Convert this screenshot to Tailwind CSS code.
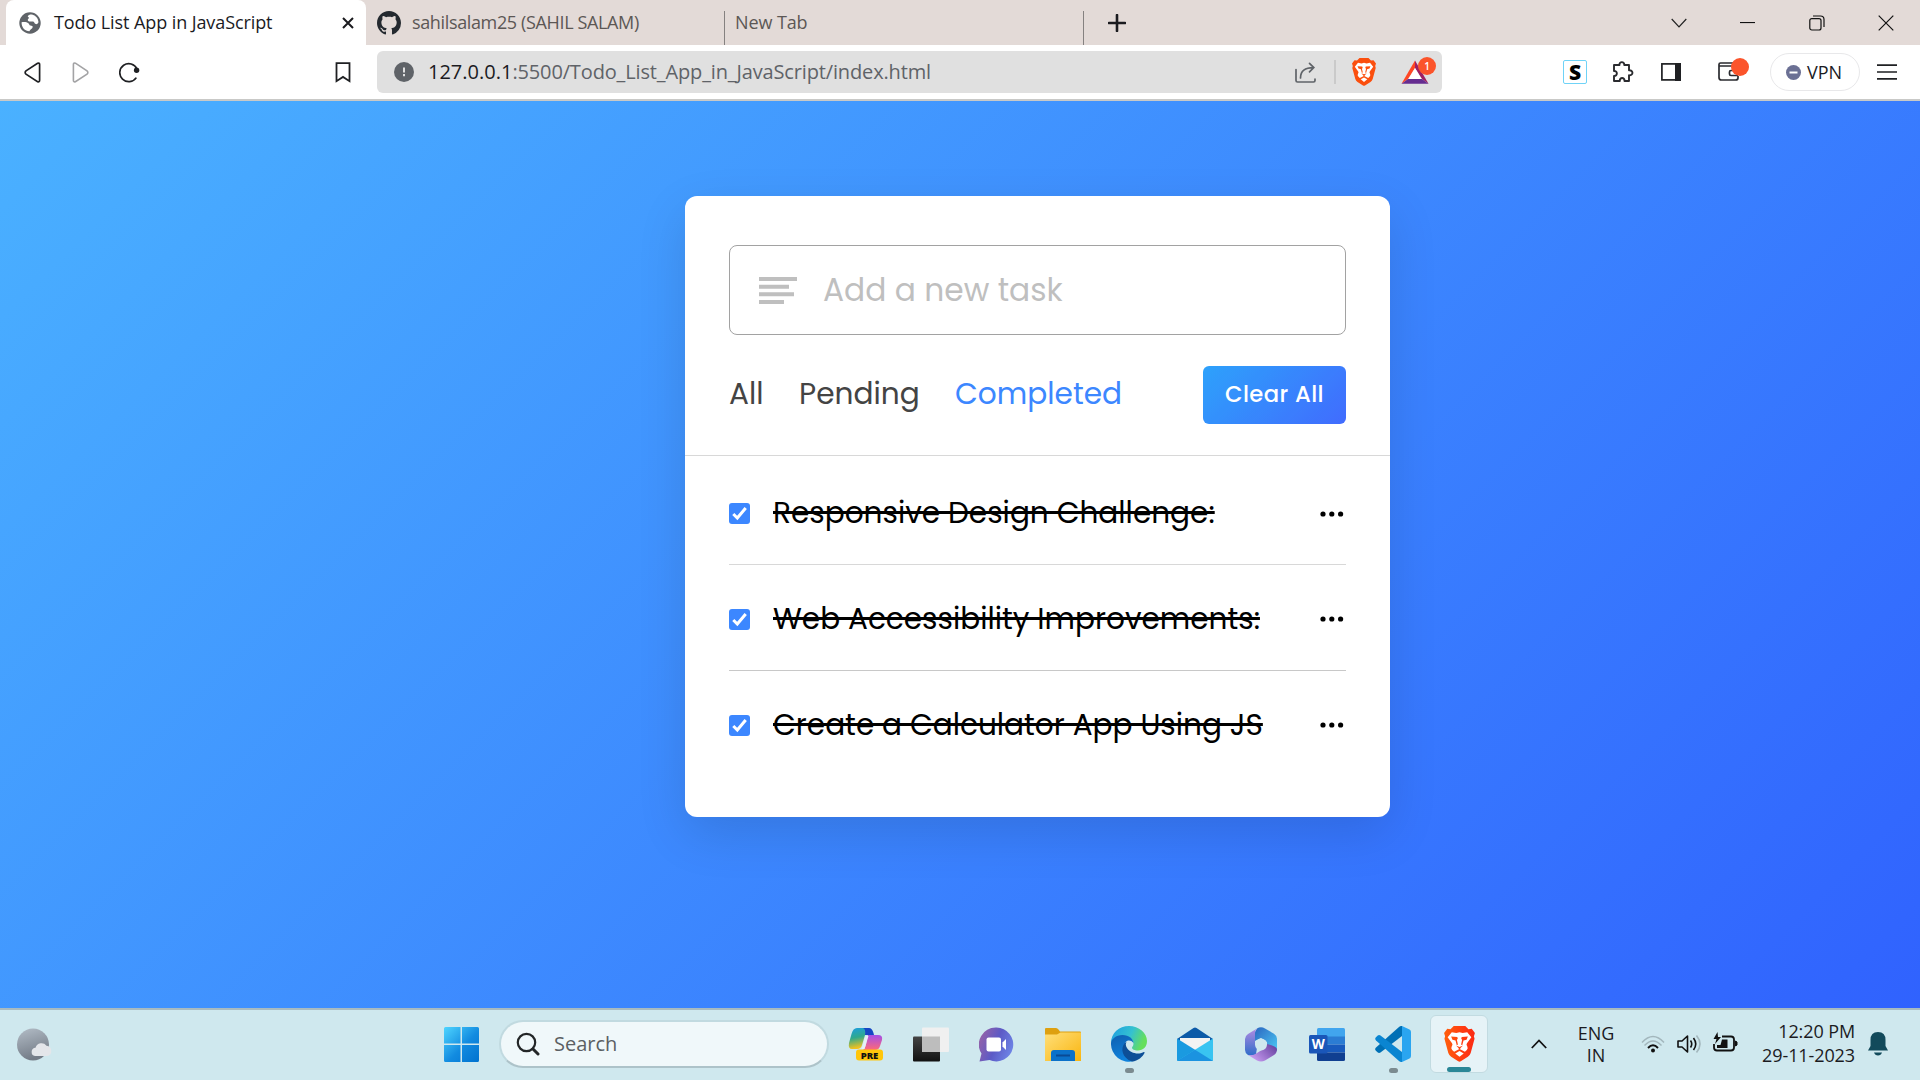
<!DOCTYPE html>
<html lang="en">
<head>
<meta charset="utf-8">
<title>Todo List App in JavaScript</title>
<script src="https://cdn.jsdelivr.net/npm/@tailwindcss/browser@4"></script>
</head>
<body class="w-[1920px] h-[1080px] overflow-hidden flex flex-col font-['Open_Sans',sans-serif] text-[#1b1b1f]">

<!-- Tab strip -->
<header class="h-[45px] shrink-0 bg-[#e3dad7] flex items-center pl-[6px]">
  <div class="w-[360px] h-full bg-white rounded-t-lg flex items-center pl-[13px] pr-[10px]">
    <svg class="w-[22px] h-[22px] shrink-0" viewBox="0 0 22 22"><circle cx="11" cy="11" r="10.7" fill="#5f6368"/><path d="M2.6 10.2c2.600-.4 5.400-.2 6.800 1 1.100 1 .6 1.900 2 2.300 1.400.3 2.400.3 2.300 1.600-.2 1.800-2.500 2.200-3.300 4.100C6 19.200 2.300 15.300 2.600 10.200z" fill="#fff"/><path d="M8.700 4.200c.9-1.600 3.200-2.200 5-1.500 3.300 1 5.600 4 5.800 7.500-.8 1.500-1.500 2.200-2.800 1.900-1.600-.5-1-2.200-2.600-2.600-2-.4-3.600.6-4.800-.5-1-1-.4-2.200.6-2.700.9-.4-.8-1-1.200-2.100z" fill="#fff"/></svg>
    <span class="ml-[13px] text-[18px] font-medium tracking-[-0.09px] whitespace-nowrap">Todo List App in JavaScript</span>
    <svg class="ml-auto w-[12px] h-[12px] mr-[2px]" viewBox="0 0 12 12"><path d="M1 1l10 10M11 1L1 11" stroke="#1b1b1f" stroke-width="2"/></svg>
  </div>
  <svg class="ml-[11px] w-6 h-6 shrink-0" viewBox="0 0 16 16"><path fill="#24292f" d="M8 0C3.580 0 0 3.580 0 8c0 3.540 2.290 6.530 5.470 7.590.4.070.55-.17.55-.38 0-.19-.010-.82-.010-1.490-2.010.37-2.530-.49-2.690-.94-.090-.23-.48-.94-.82-1.130-.28-.15-.68-.52-.010-.53.63-.010 1.080.58 1.230.82.72 1.210 1.870.87 2.330.66.070-.52.28-.87.51-1.070-1.780-.2-3.640-.89-3.640-3.950 0-.87.31-1.590.82-2.150-.080-.2-.36-1.020.080-2.120 0 0 .67-.21 2.200.82.64-.18 1.320-.27 2-.27s1.360.09 2 .27c1.530-1.040 2.200-.82 2.200-.82.44 1.100.16 1.920.08 2.120.51.56.82 1.270.82 2.150 0 3.070-1.870 3.750-3.650 3.950.29.25.54.73.54 1.480 0 1.070-.01 1.930-.01 2.200 0 .21.15.46.55.38A8.010 8.010 0 0 0 16 8c0-4.420-3.580-8-8-8z"/></svg>
  <div class="ml-[11px] w-[312px] h-full flex items-center"><span class="text-[18px] tracking-[-0.36px] text-[#5c5755] whitespace-nowrap">sahilsalam25 (SAHIL SALAM)</span></div>
  <div class="self-end w-[1px] h-[34px] bg-[#858180]"></div>
  <div class="ml-[10px] w-[348px]"><span class="text-[18px] tracking-[-0.1px] text-[#5c5755]">New Tab</span></div>
  <div class="self-end w-[1px] h-[34px] bg-[#858180]"></div>
  <svg class="ml-[24px] w-[18px] h-[18px]" viewBox="0 0 18 18"><path d="M9 1v16M1 9h16" stroke="#1b1b1f" stroke-width="2.600" stroke-linecap="round"/></svg>
  <div class="ml-auto flex items-center mr-[26px]">
    <svg class="w-4 h-[10px] mr-[53px]" viewBox="0 0 16 10"><path d="M.7 1L8 8.800 15.300 1" fill="none" stroke="#222" stroke-width="1.200"/></svg>
    <svg class="w-4 h-[2px] mr-[53px]" viewBox="0 0 16 2"><path d="M0 .5h15" stroke="#111" stroke-width="1.200"/></svg>
    <svg class="w-4 h-4 mr-[53px]" viewBox="0 0 16 16" fill="none" stroke="#111" stroke-width="1.200"><rect x=".8" y="3.600" width="11.200" height="11.400" rx="2"/><path d="M4 1h7.500q3.500 0 3.500 3.500V12"/></svg>
    <svg class="w-4 h-4" viewBox="0 0 16 16"><path d="M.7.7l14.600 14.600M15.300.7L.7 15.300" stroke="#111" stroke-width="1.200"/></svg>
  </div>
</header>

<!-- Toolbar -->
<nav class="h-[56px] pt-[6px] shrink-0 bg-white border-b-2 border-[#c9c9c7] flex items-start">
  <div class="h-[42px] w-[377px] flex items-center pl-[24px] pr-[26px]">
    <svg class="w-[17px] h-[21px]" viewBox="0 0 17 21"><path d="M13.600 1.200L2 8.800q-1.700 1.600 0 3.300l11.600 7.600q2 .6 2-1.400V2.600q0-2-2-1.400z" fill="none" stroke="#1f2023" stroke-width="1.700"/></svg>
    <svg class="ml-[31px] w-[17px] h-[21px]" viewBox="0 0 17 21"><path d="M3.400 1.200L15 8.800q1.700 1.600 0 3.300L3.400 19.700q-2 .6-2-1.400V2.600q0-2 2-1.400z" fill="none" stroke="#a3a3a5" stroke-width="1.600"/></svg>
    <svg class="ml-[30px] w-[21px] h-[21px]" viewBox="0 0 21 21"><path d="M18 7A9 9 0 1 0 17.300 15.600" fill="none" stroke="#1f2023" stroke-width="1.700"/><circle cx="17.600" cy="8.200" r="2.700" fill="#1f2023"/></svg>
    <svg class="ml-auto w-[16px] h-[21px]" viewBox="0 0 16 21"><path d="M1.500 1.200h13v18l-6.500-4.300-6.500 4.300z" fill="none" stroke="#1f2023" stroke-width="1.800"/></svg>
  </div>
  <div class="h-[42px] w-[1065px] bg-[#e0e0e0] rounded-md flex items-center pl-[17px] pr-[6px]">
    <svg class="w-5 h-5" viewBox="0 0 20 20"><circle cx="10" cy="10" r="10" fill="#5f6368"/><path d="M10 5.500v5M10 12v2.200" stroke="#e0e0e0" stroke-width="2"/></svg>
    <div class="ml-[14px] text-[20px] text-[#5f6368] whitespace-nowrap flex"><span class="text-[#1b1b1f]">127.0.0.1</span><span class="tracking-[-0.14px]">:5500/Todo_List_App_in_JavaScript/index.html</span></div>
    <svg class="ml-auto w-[21px] h-[21px]" viewBox="0 0 21 21" fill="none" stroke="#5f6368" stroke-width="1.700" stroke-linecap="round"><path d="M1 7.500v11q0 1.500 1.500 1.500h16q1.500 0 1.500-1.500v-1.500M5.500 16C5.500 9 10 5.600 18.500 5.600M14.500 1.400l4.300 4.200-4.300 4.300"/></svg>
    <div class="ml-[18px] w-[2px] h-6 bg-[#cacaca]"></div>
    <svg class="ml-[16px] w-[24px] h-[28px]" viewBox="0 0 24 28" fill="#fb4f0e"><use href="#lion"/></svg>
    <div class="ml-[25px] w-[35px] h-[28px] relative">
      <svg class="w-[36px] h-[28px]" viewBox="0 0 36 28"><path d="M14 2.500L.5 25.800 7 21 14 10z" fill="#ff4724"/><path d="M14 2.500L27.500 25.800 21 21 14 10z" fill="#9e1f63"/><path d="M.5 25.800h27L21 21H7z" fill="#662d91"/><path d="M14 10L7.500 21h13z" fill="#fff"/></svg>
      <div class="absolute -top-[1px] right-0 w-[18px] h-[18px] rounded-full bg-[#fb542b] text-white text-[10px] leading-[18px] text-center font-semibold">1</div>
    </div>
  </div>
  <div class="h-[42px] flex-1 flex items-center pl-[121px]">
    <div class="w-6 h-6 border border-[#6fd3f7] rounded-[2px] text-black text-[21px] leading-[22px] font-extrabold text-center">S</div>
    <svg class="ml-[25px] w-[22px] h-[22px]" viewBox="0 0 22 22"><path d="M2 4h5.500c-.6-3.800 5.300-3.800 4.700 0H17v5.300c4.600-.6 4.600 5.500 0 5V20h-4.500c.3-4-5-4-4.700 0H2v-5c3.800.2 3.800-5.300 0-5z" fill="none" stroke="#2a2b2f" stroke-width="1.900" stroke-linejoin="round"/></svg>
    <svg class="ml-[27px] w-5 h-[18px]" viewBox="0 0 20 18"><rect x=".9" y=".9" width="18" height="16" fill="none" stroke="#1f2023" stroke-width="1.700"/><path d="M14 0h6v18h-6z" fill="#1f2023"/></svg>
    <div class="ml-[37px] mb-[4px] w-[31px] h-[24px] relative">
      <svg class="w-[31px] h-[24px]" viewBox="0 0 31 24" fill="none" stroke="#2a2b2f" stroke-width="1.700"><path d="M20 9v-2.500q0-1.500-1.500-1.500h-16Q1 5 1 6.500v13Q1 22 3.500 22h14q2.500 0 2.500-2v-2M1 8h18M20 17.500h-7q-1.500 0-1.500-1.500v-2q0-1.500 1.500-1.500h7"/></svg>
      <div class="absolute top-0 right-0 w-[18px] h-[18px] rounded-full bg-[#fb542b]"></div>
    </div>
    <div class="ml-[21px] w-[90px] h-[38px] rounded-full border border-[#e8e8ea] flex items-center pl-[15px] gap-[6px]">
      <svg class="w-[15px] h-[15px]" viewBox="0 0 15 15"><circle cx="7.500" cy="7.500" r="7.500" fill="#6b7094"/><path d="M3.500 7.500h8" stroke="#fff" stroke-width="2"/></svg>
      <span class="text-[18px]">VPN</span>
    </div>
    <svg class="ml-[17px] w-5 h-4" viewBox="0 0 20 16"><path d="M0 1.200h20M0 8h20M0 14.800h20" stroke="#1f2023" stroke-width="1.700"/></svg>
  </div>
</nav>

<!-- Page -->
<main class="h-[907px] shrink-0 bg-[linear-gradient(135deg,#4ab1ff,#3062fe)] pt-[95px] pl-[685px] font-['Poppins','Inter',sans-serif] [font-feature-settings:'cv11']">
  <section class="w-[705px] h-[621px] bg-white rounded-[12px] shadow-[0_17px_50px_rgba(0,0,0,0.12)]">
    <div class="h-[260px] border-b border-[#d8d8d8] px-[44px] pt-[49px]">
      <div class="h-[90px] border border-[#a2a2a2] rounded-[8px] flex items-center pl-[29px]">
        <svg class="w-[38px] h-[27px]" viewBox="0 0 38 27" fill="#bfbfbf"><path d="M0 0h38v4H0zM0 7.700h30v4H0zM0 15.300h35v4H0zM0 23h25v4H0z"/></svg>
        <span class="ml-[26px] text-[31.3px] text-[#bfbfbf]">Add a new task</span>
      </div>
      <div class="mt-[31px] h-[58px] flex items-center text-[29.6px] text-[#444]">
        <span class="w-[70px] pb-[2px]">All</span>
        <span class="w-[156px] pb-[2px]">Pending</span>
        <span class="pb-[2px] text-[#3c87ff]">Completed</span>
        <div class="ml-auto w-[143px] h-[58px] rounded-[6px] opacity-90 bg-[linear-gradient(135deg,#1798fb,#2d5cfe)] text-white text-[22.7px] tracking-[0.4px] font-medium flex items-center justify-center pb-[1px]"><span>Clear All</span></div>
      </div>
    </div>
    <ul class="px-[44px] text-[29.55px] text-black">
      <li class="h-[109px] pt-[7px] border-b border-[#d8d8d8] flex items-center"><svg class="w-[21px] h-[21px]" viewBox="0 0 21 21"><use href="#chk"/></svg><span class="ml-[23px] line-through decoration-[2.500px]">Responsive Design Challenge:</span><svg class="ml-auto mr-[2px] w-6 h-[6px]" viewBox="0 0 24 6"><use href="#dots"/></svg></li>
      <li class="h-[106px] pt-[3px] border-b border-[#c8c8c8] flex items-center"><svg class="w-[21px] h-[21px]" viewBox="0 0 21 21"><use href="#chk"/></svg><span class="ml-[23px] line-through decoration-[2.500px]">Web Accessibility Improvements:</span><svg class="ml-auto mr-[2px] w-6 h-[6px]" viewBox="0 0 24 6"><use href="#dots"/></svg></li>
      <li class="h-[105px] pt-[3px] flex items-center"><svg class="w-[21px] h-[21px]" viewBox="0 0 21 21"><use href="#chk"/></svg><span class="ml-[23px] line-through decoration-[2.500px]">Create a Calculator App Using JS</span><svg class="ml-auto mr-[2px] w-6 h-[6px]" viewBox="0 0 24 6"><use href="#dots"/></svg></li>
    </ul>
  </section>
</main>

<!-- Taskbar -->
<footer class="h-[72px] shrink-0 border-t-2 border-[#a8bbc0] bg-[#cfe8ee] flex items-center pb-[2px]">
  <svg class="ml-[17px] w-[35px] h-[33px]" viewBox="0 0 35 33"><defs><linearGradient id="moon" x2=".3" y2="1"><stop stop-color="#b3bdc7"/><stop offset="1" stop-color="#747c87"/></linearGradient></defs><circle cx="16" cy="16.500" r="16" fill="url(#moon)"/><path d="M18 28a4.200 4.200 0 0 1 .5-8.300 6.300 6.300 0 0 1 11-2 5.200 5.200 0 0 1 .5 10.300z" fill="#e4e6ea"/></svg>
  <svg class="ml-[392px] w-[35px] h-[35px]" viewBox="0 0 35 35"><defs><linearGradient id="win" gradientUnits="userSpaceOnUse" x2="35" y2="35"><stop stop-color="#4fd5ff"/><stop offset=".55" stop-color="#128be0"/><stop offset="1" stop-color="#0072cf"/></linearGradient></defs><path fill="url(#win)" d="M1.500 0H16.500V16.500H0V1.500Q0 0 1.500 0zM18 0h15.500Q35 0 35 1.500v15H18zM0 18h16.500v17h-15Q0 35 0 33.500zM18 18h17v15.500q0 1.500-1.500 1.500H18z"/></svg>
  <div class="ml-[20px] w-[330px] h-[48px] rounded-full bg-[#f0f8fa] border-2 border-t-[#c1dae0] border-x-[#c1dae0] border-b-[#adc3c9] flex items-center pl-[15px]">
    <svg class="w-[24px] h-[24px]" viewBox="0 0 24 24" fill="none" stroke="#232627" stroke-linecap="round"><circle cx="10.500" cy="10.500" r="8.700" stroke-width="2.200"/><path d="M17 17l5 5" stroke-width="3"/></svg>
    <span class="ml-[14px] text-[20px] text-[#5b6063]">Search</span>
  </div>
  <!-- Copilot -->
  <svg class="ml-[19px] w-[36px] h-[34px]" viewBox="0 0 36 34"><defs><linearGradient id="cpa" x2=".2" y2="1"><stop stop-color="#1b9de2"/><stop offset=".5" stop-color="#2fa98c"/><stop offset="1" stop-color="#f6c21c"/></linearGradient><linearGradient id="cpb" x2="0" y2="1"><stop stop-color="#a44ee8"/><stop offset="1" stop-color="#ff6a76"/></linearGradient></defs><path d="M9 1h12q-3 2-4 7l-3 10q-1 4-5 4H4q-4 0-3-6l2.500-9Q5 1 9 1z" fill="url(#cpa)"/><path d="M15 1h6q3 0 4.500 5l.5 2h-9q1-6-2-7z" fill="#1546c4"/><path d="M20 8h10q5 0 4 5l-2 6q-1 4-5 4H15q2-1 3-6z" fill="url(#cpb)"/><path d="M17.500 9h3l-4 13h-3z" fill="#e6f0f6"/><rect x="8" y="22.500" width="27" height="11" rx="3" fill="#ffc60b"/><text x="21.500" y="31.500" text-anchor="middle" font-family="Open Sans" font-weight="800" font-size="9.500" fill="#111">PRE</text></svg>
  <!-- Task view -->
  <svg class="ml-[29px] w-[36px] h-[35px]" viewBox="0 0 36 35"><defs><linearGradient id="tv" x2="0" y2="1"><stop stop-color="#444"/><stop offset="1" stop-color="#111"/></linearGradient></defs><rect y="9.500" width="27" height="25" rx="1" fill="url(#tv)"/><rect x="9" y=".5" width="27" height="24.500" rx="1" fill="#f0f0f0"/><path d="M9 9.500h18V25H9z" fill="#bdbdbd"/></svg>
  <!-- Chat -->
  <svg class="ml-[30px] w-[35px] h-[35px]" viewBox="0 0 35 35"><defs><linearGradient id="ch" x1="0" x2="1" y1=".3" y2=".7"><stop stop-color="#9562a8"/><stop offset=".5" stop-color="#5c5ac6"/><stop offset="1" stop-color="#6f87e8"/></linearGradient></defs><path d="M17.500.5a17 17 0 1 1-7 32.600L.5 34.500l2-8A17 17 0 0 1 17.500.5z" fill="url(#ch)"/><rect x="7.500" y="10.500" width="14.500" height="14" rx="2" fill="#fff"/><path d="M23.500 15.500l3.500-3.500v11l-3.500-3.500z" fill="#fff"/></svg>
  <!-- Explorer -->
  <svg class="ml-[31px] w-[36px] h-[33px]" viewBox="0 0 36 33"><defs><linearGradient id="fo" x2="1" y2="1"><stop stop-color="#ffdf7a"/><stop offset="1" stop-color="#f9b50f"/></linearGradient></defs><path d="M0 1q0-1 1-1h10q1.500 0 2.500 1.500L15 3.500h20q1 0 1 1V12H0z" fill="#dea010"/><path d="M0 6.500h12l3.500-2H36V33H0z" fill="url(#fo)"/><path d="M6 33V25q0-3 3-3h18q3 0 3 3v8z" fill="#0b71c9"/><path d="M11 27.500h14" stroke="#0a4a94" stroke-width="2"/></svg>
  <!-- Edge -->
  <div class="ml-[30px] w-[36px] h-[36px] relative"><svg class="w-[36px] h-[36px]" viewBox="0 0 36 36"><defs><linearGradient id="ea" x2="1" y2=".3"><stop stop-color="#1b9de2"/><stop offset=".6" stop-color="#35c1d0"/><stop offset="1" stop-color="#65df5c"/></linearGradient><linearGradient id="eb" x2=".3" y2="1"><stop stop-color="#0f5fb0"/><stop offset="1" stop-color="#0f82dc"/></linearGradient></defs><path d="M0 17C0 7 8 0 18 0s18 7 18 15c0 6-4 9.500-9 9.500-3.500 0-6-1.200-6-2.700 0-1 1.500-1.800 1.500-4C22.500 14 19 10 13 10 6 10 1 14 0 17z" fill="url(#ea)"/><path d="M0 17c0-3.500 5-8 11.500-8C18 9 22.500 13 22.500 17.500c-1-3-6-4.500-8-1C12 21 14 30 23 35A18 18 0 0 1 0 17z" fill="url(#eb)"/><path d="M14 17c-5 5-3 15 7 18.500 6-.5 11-5 12.500-8.500.3-1-.5-1.200-1.200-.8C27 29 19 27 16 22c-1.500-2.500-1.500-4-.5-6z" fill="#0d4f97"/></svg><div class="absolute top-[42px] left-[14px] w-[9px] h-[5px] rounded-full bg-[#7b8b90]"></div></div>
  <!-- Mail -->
  <svg class="ml-[30px] w-[36px] h-[34px]" viewBox="0 0 36 34"><path d="M0 12L16.500 1q1.500-1 3 0L36 12v4H0z" fill="#0c5aa8"/><path d="M3 11h30v12H3z" fill="#f3f3f3"/><path d="M0 11.500L36 34H1q-1 0-1-1z" fill="#1a9ae0"/><path d="M36 11.500L0 34h35q1 0 1-1z" fill="#39c4f1"/><path d="M18 22.800L36 34H0z" fill="#1b93e0"/></svg>
  <!-- Microsoft 365 -->
  <svg class="ml-[31px] w-[34px] h-[35px]" viewBox="0 0 34 35"><defs><linearGradient id="ma" x2="1" y2="1"><stop stop-color="#2b66c0"/><stop offset="1" stop-color="#4cc9f5"/></linearGradient><linearGradient id="mb" x2="0" y2="1"><stop stop-color="#b18be2"/><stop offset="1" stop-color="#2e6dc9"/></linearGradient><linearGradient id="mc" x1="1" x2="0" y2=".6"><stop stop-color="#5f3b9a"/><stop offset="1" stop-color="#c79bf0"/></linearGradient></defs><path d="M13 1.500Q17-1 21 1.500l9 5.300q3 2 3 5V24l-10-5v-4l-6-4-6 3V5z" fill="url(#ma)"/><path d="M13 1.500L4 7Q1 9 1 12v11q0 3 3 5 5 2 8-1l1-6-2-4V7q0-4 2-5.500z" fill="url(#mb)"/><path d="M33 22q0 4-3 6l-9 5.500q-4 2-8 0L4 28q5 1 9-2l8-5 2-4q9 2 10 5z" fill="url(#mc)"/><circle cx="17" cy="17.500" r="6" fill="#cfe8ee"/></svg>
  <!-- Word -->
  <svg class="ml-[31px] w-[36px] h-[33px]" viewBox="0 0 36 33"><path d="M8 1.500Q8 0 9.500 0h25Q36 0 36 1.500V9H8z" fill="#41a5ee"/><path d="M8 8.500h28v8H8z" fill="#2b7cd3"/><path d="M8 16.500h28v8H8z" fill="#185abd"/><path d="M8 24.500h28v7q0 1.500-1.500 1.500h-25Q8 33 8 31.500z" fill="#103f91"/><rect y="7" width="18.500" height="18.500" rx="1.500" fill="#1a56b8"/><text x="9.200" y="21" text-anchor="middle" font-family="Open Sans" font-weight="700" font-size="13.500" fill="#fff">W</text></svg>
  <!-- VS Code -->
  <div class="ml-[30px] w-[36px] h-[36px] relative"><svg class="w-[36px] h-[36px]" viewBox="0 0 36 36"><path d="M27 0v10L5.500 26.500Q4 27.500 2.500 26.300L.7 24.600Q-.5 23 1 21.500L24 1q1.500-1.200 3-1z" fill="#0070b5"/><path d="M27 36V26L5.500 9.500Q4 8.500 2.500 9.700L.7 11.400Q-.5 13 1 14.500L24 35q1.500 1.200 3 1z" fill="#0a85d1"/><path d="M27 0l7.500 3.500Q36 4.300 36 6v24q0 1.700-1.500 2.500L27 36z" fill="#2aa5f0"/></svg><div class="absolute top-[42px] left-[14px] w-[9px] h-[5px] rounded-full bg-[#7b8b90]"></div></div>
  <!-- Brave -->
  <div class="ml-[19px] w-[58px] h-[58px] rounded-md bg-[#e6f3f7] border border-[#c2dbe1] flex justify-center items-start pt-[10px] relative"><svg class="w-[31px] h-[36px]" viewBox="0 0 24 28" fill="url(#lg)"><defs><linearGradient id="lg" gradientUnits="userSpaceOnUse" x2="24"><stop stop-color="#ff5f0c"/><stop offset=".6" stop-color="#ff3c12"/><stop offset="1" stop-color="#fb2a14"/></linearGradient></defs><use href="#lion"/></svg><div class="absolute bottom-0 left-[16px] w-6 h-[5px] rounded-full bg-[#2a8797]"></div></div>
  <svg class="ml-[43px] w-[16px] h-[10px]" viewBox="0 0 16 10"><path d="M.8 9L8 1.500 15.200 9" fill="none" stroke="#111" stroke-width="1.800"/></svg>
  <div class="ml-[26px] mb-[1px] w-[46px] text-[18px] leading-[22px] text-center"><div>ENG</div><div>IN</div></div>
  <svg class="ml-[22px] w-6 h-[18px]" viewBox="0 0 24 18" fill="none" stroke-width="1.500"><path d="M1 7.500Q12-4.500 23 7.500M3.500 10.500q8.500-9 17 0" stroke="#a3b7bd"/><path d="M7 13q5-5.500 10 0" stroke="#111" stroke-width="1.900"/><circle cx="12" cy="15.500" r="2" fill="#111"/></svg>
  <svg class="ml-[12px] w-[25px] h-[20px]" viewBox="0 0 25 20" fill="none" stroke="#111" stroke-width="1.600" stroke-linejoin="round"><path d="M1 7v6h4l5.500 5V2L5 7zM13.500 6.500q2.500 3.500 0 7M16.500 4q4.500 6 0 12"/><path d="M19.500 1.500q7 8.500 0 17" stroke="#a3b7bd"/></svg>
  <svg class="ml-[11px] mb-[3px] w-[25px] h-[21px]" viewBox="0 0 25 21"><path d="M9 4.500h9q3 0 3 3v8q0 3-3 3H4q-3 0-3-3V12" fill="none" stroke="#111" stroke-width="1.800"/><path d="M22.500 9v5l1.500-1v-3z" fill="#111" stroke="#111"/><path d="M9 7.500h5.500v8.500H4v-3h3.500z" fill="#111"/><path d="M4.500 0L.5 7h3L2 12l6-7H5z" fill="#111"/></svg>
  <div class="ml-auto mb-[2px] text-[18px] tracking-[-0.1px] leading-[24px] text-right"><div>12:20 PM</div><div>29-11-2023</div></div>
  <svg class="ml-[13px] mr-[32px] w-5 h-[24px]" viewBox="0 0 20 24"><path d="M10 0q7.500 0 7.500 8v6l2.500 4.500H0L2.500 14V8Q2.500 0 10 0z" fill="#124a5b"/><path d="M6 20.500h8q-1 3-4 3t-4-3z" fill="#124a5b"/></svg>
</footer>

<!-- Shared symbols -->
<svg class="hidden"><defs>
  <g id="lion"><path d="M7.500 0h9L19 2.500l2.500-.3L24 5.500l-.8 2.500.5 2-3 11Q20 23 18.500 24L13 27.500q-1 .6-2 0L5.500 24Q4 23 3.300 21L.3 10l.5-2L0 5.500l2.500-3.300L5 2.500z"/><path d="M6 4.800l3.500.6 2.500-.6 2.500.6 3.500-.6 3.200 4-3.400 4.600q-.8 1 .2 2.300.9 1.600-.3 2.900l-1.500 1.400-3-1.500-1.200-.5-1.200.5-3 1.500-1.500-1.400q-1.200-1.300-.3-2.900 1-1.300.2-2.300L2.800 8.800z" fill="#fff"/><path d="M12 19.400l3.300 1.900L12 24l-3.300-2.700z" fill="#fff"/><path d="M5.500 8.200l4.700.3.500 1-.7 1.400.8 3.600-1 .3-.9-3.600-2.400-.6zM18.500 8.200l-4.700.3-.5 1 .7 1.400-.8 3.600 1 .3.900-3.600 2.400-.6zM9.300 15.200L12 16.300l2.700-1.100-2.100 2.200v1h-1.200v-1z"/></g>
  <g id="chk"><rect width="21" height="21" rx="3" fill="#3c87ff"/><path d="M4.300 11l4 4L16.700 5" fill="none" stroke="#fff" stroke-width="3"/></g>
  <g id="dots"><circle cx="3" cy="3" r="2.600"/><circle cx="11.800" cy="3" r="2.600"/><circle cx="20.600" cy="3" r="2.600"/></g>
</defs></svg>
</body>
</html>
